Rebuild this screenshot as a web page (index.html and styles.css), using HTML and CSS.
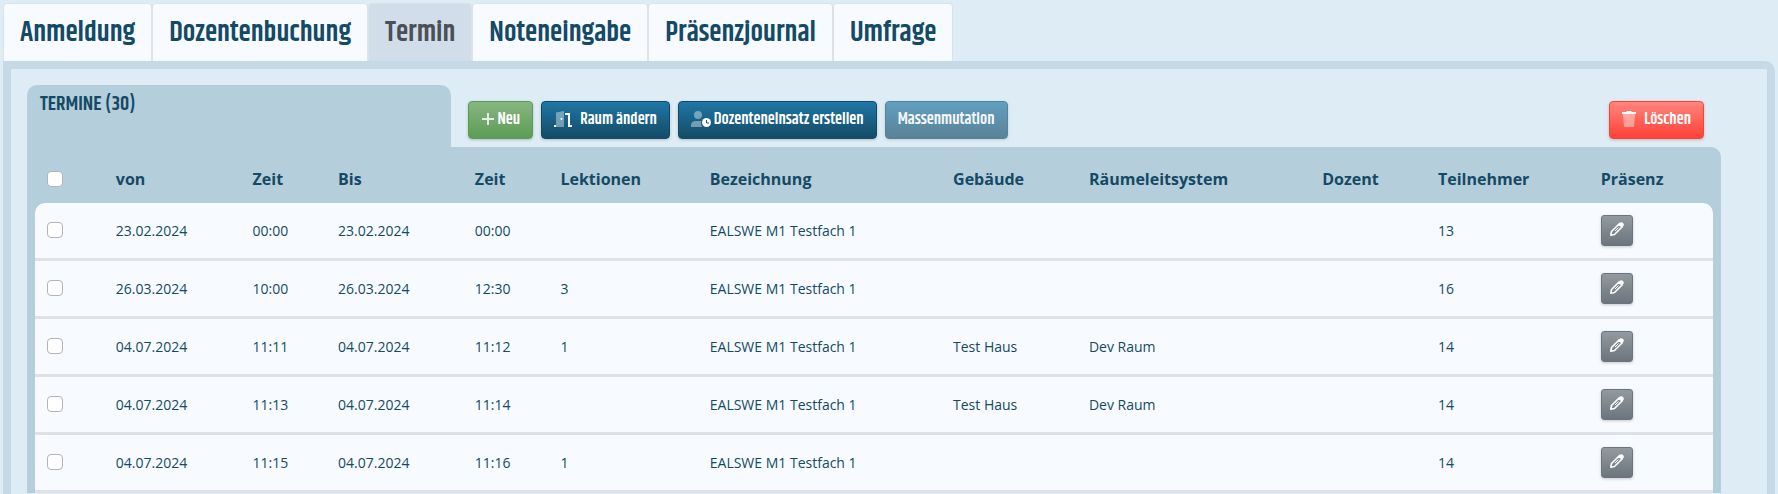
FILE: index.html
```html
<!DOCTYPE html>
<html lang="de">
<head>
    <meta charset="utf-8">
    <title>Termine</title>
    <link rel="stylesheet" href="styles.css">
</head>
<body>
    <svg class="sprite" aria-hidden="true">
        <symbol id="pen" viewBox="0 0 14 14">
            <path d="M.8 13.200L1.500 9.500L9 2L12 5L4.500 12.500Z" fill="none" stroke="currentColor" stroke-width="1.600" stroke-linejoin="round"/>
            <path d="M8.500 2L10 .6Q11.500-.4 13 1Q14.400 2.500 13.400 4L12 5.500Z" fill="currentColor"/>
            <path d="M5 9L8.500 5.500" stroke="currentColor" stroke-width="1"/>
        </symbol>
    </svg>

    <nav class="tabs">
        <a class="tab" href="#">Anmeldung</a>
        <a class="tab" href="#">Dozentenbuchung</a>
        <a class="tab active" href="#">Termin</a>
        <a class="tab" href="#">Noteneingabe</a>
        <a class="tab" href="#">Präsenzjournal</a>
        <a class="tab" href="#">Umfrage</a>
    </nav>

    <main class="panel">
        <div class="card-top">
            <h2 class="card-title">Termine (30)</h2>
            <div class="toolbar">
                <button type="button" class="btn btn-green">
                    <svg viewBox="0 0 14 16" width="14" height="16"><path d="M7 2v12M1 8h12" stroke="currentColor" stroke-width="2" opacity=".8"/></svg>
                    Neu
                </button>
                <button type="button" class="btn btn-blue btn-wide">
                    <svg viewBox="0 0 18 16" width="18" height="16"><path d="M2 1.500L10 0v16H2z" fill="currentColor" opacity=".4"/><path d="M0 15h2M11 3h4v12h3" fill="none" stroke="currentColor" stroke-width="2"/><circle cx="7.500" cy="8" r="1" fill="currentColor"/></svg>
                    Raum ändern
                </button>
                <button type="button" class="btn btn-blue">
                    <svg viewBox="0 0 20 16" width="20" height="16"><path d="M7 0a4 4 0 1 1 0 8a4 4 0 0 1 0-8zM0 16v-1.500Q0 10 5 10h5.500a5.500 5.500 0 0 0 1 6z" fill="currentColor" opacity=".4"/><circle cx="15.500" cy="11.500" r="4.500" fill="currentColor"/><path d="M15.500 9v3h2.500" fill="none" stroke="#175a7d" stroke-width="1"/></svg>
                    Dozenteneinsatz erstellen
                </button>
                <button type="button" class="btn btn-blue" disabled>Massenmutation</button>
                <button type="button" class="btn btn-red btn-wide">
                    <svg viewBox="0 0 14 16" width="14" height="16"><path d="M1 3h12l-1 13H2z" fill="currentColor" opacity=".4"/><path d="M0 1h4l1-1h4l1 1h4v2H0z" fill="currentColor"/></svg>
                    Löschen
                </button>
            </div>
        </div>

        <div class="card">
            <table class="dates">
                <colgroup>
                    <col class="col-check">
                    <col class="col-date">
                    <col class="col-time">
                    <col class="col-date">
                    <col class="col-time">
                    <col class="col-lessons">
                    <col class="col-name">
                    <col class="col-building">
                    <col class="col-room">
                    <col class="col-teacher">
                    <col class="col-members">
                    <col>
                </colgroup>
                <thead>
                    <tr>
                        <th><input type="checkbox" aria-label="Alle auswählen"></th>
                        <th>von</th>
                        <th>Zeit</th>
                        <th>Bis</th>
                        <th>Zeit</th>
                        <th>Lektionen</th>
                        <th>Bezeichnung</th>
                        <th>Gebäude</th>
                        <th>Räumeleitsystem</th>
                        <th>Dozent</th>
                        <th>Teilnehmer</th>
                        <th>Präsenz</th>
                    </tr>
                </thead>
                <tbody>
                    <tr>
                        <td><input type="checkbox" aria-label="Termin auswählen"></td>
                        <td>23.02.2024</td>
                        <td>00:00</td>
                        <td>23.02.2024</td>
                        <td>00:00</td>
                        <td></td>
                        <td>EALSWE M1 Testfach 1</td>
                        <td></td>
                        <td></td>
                        <td></td>
                        <td>13</td>
                        <td><button type="button" class="btn-edit" aria-label="Bearbeiten"><svg width="14" height="14"><use href="#pen"/></svg></button></td>
                    </tr>
                    <tr>
                        <td><input type="checkbox" aria-label="Termin auswählen"></td>
                        <td>26.03.2024</td>
                        <td>10:00</td>
                        <td>26.03.2024</td>
                        <td>12:30</td>
                        <td>3</td>
                        <td>EALSWE M1 Testfach 1</td>
                        <td></td>
                        <td></td>
                        <td></td>
                        <td>16</td>
                        <td><button type="button" class="btn-edit" aria-label="Bearbeiten"><svg width="14" height="14"><use href="#pen"/></svg></button></td>
                    </tr>
                    <tr>
                        <td><input type="checkbox" aria-label="Termin auswählen"></td>
                        <td>04.07.2024</td>
                        <td>11:11</td>
                        <td>04.07.2024</td>
                        <td>11:12</td>
                        <td>1</td>
                        <td>EALSWE M1 Testfach 1</td>
                        <td>Test Haus</td>
                        <td>Dev Raum</td>
                        <td></td>
                        <td>14</td>
                        <td><button type="button" class="btn-edit" aria-label="Bearbeiten"><svg width="14" height="14"><use href="#pen"/></svg></button></td>
                    </tr>
                    <tr>
                        <td><input type="checkbox" aria-label="Termin auswählen"></td>
                        <td>04.07.2024</td>
                        <td>11:13</td>
                        <td>04.07.2024</td>
                        <td>11:14</td>
                        <td></td>
                        <td>EALSWE M1 Testfach 1</td>
                        <td>Test Haus</td>
                        <td>Dev Raum</td>
                        <td></td>
                        <td>14</td>
                        <td><button type="button" class="btn-edit" aria-label="Bearbeiten"><svg width="14" height="14"><use href="#pen"/></svg></button></td>
                    </tr>
                    <tr>
                        <td><input type="checkbox" aria-label="Termin auswählen"></td>
                        <td>04.07.2024</td>
                        <td>11:15</td>
                        <td>04.07.2024</td>
                        <td>11:16</td>
                        <td>1</td>
                        <td>EALSWE M1 Testfach 1</td>
                        <td></td>
                        <td></td>
                        <td></td>
                        <td>14</td>
                        <td><button type="button" class="btn-edit" aria-label="Bearbeiten"><svg width="14" height="14"><use href="#pen"/></svg></button></td>
                    </tr>
                </tbody>
            </table>
        </div>
    </main>
</body>
</html>
```

FILE: styles.css
```css
* {
    box-sizing: border-box;
}
body {
    margin: 0;
    padding: 3px 3px 0;
    height: 100vh;
    overflow: hidden;
    background: #deecf5;
    color: #144a65;
    font-family: "Open Sans", "Noto Sans", sans-serif;
    font-size: 14px;
}
.sprite {
    display: none;
}

/* tabs */
.tabs {
    display: flex;
}
.tab {
    height: 58px;
    padding: 0 16px;
    border: 1px solid #dee2e6;
    border-bottom: 0;
    border-radius: 4px 4px 0 0;
    background: #f7fbff;
    color: #144a65;
    font-family: Khand, "Liberation Sans Narrow", "Open Sans", sans-serif;
    font-size: 28px;
    font-weight: 600;
    line-height: 58px;
    text-decoration: none;
}
.tab.active {
    background: #d1dde8;
    color: #495057;
}

.panel {
    border: 8px solid #c6d9e7;
    border-radius: 0 10px 0 0;
    padding: 16px 46px 16px 16px;
}

/* title and buttons */
.card-top {
    display: flex;
}
.card-title {
    width: 25%;
    height: 62px;
    margin: 0;
    padding: 0 13px;
    border-radius: 10px 10px 0 0;
    background: #b5cedc;
    font-family: Khand, "Liberation Sans Narrow", "Open Sans", sans-serif;
    font-size: 20px;
    font-weight: 600;
    line-height: 40px;
    text-transform: uppercase;
}
.toolbar {
    flex: 1;
    display: flex;
    align-items: flex-end;
    gap: 8px;
    padding: 0 17px 8px;
}
.btn {
    display: flex;
    align-items: center;
    gap: 3px;
    height: 38px;
    padding: 0 12px 2px;
    border: 1px solid;
    border-radius: 4px;
    box-shadow: 0 1px 3px rgba(0, 0, 0, 0.2);
    color: #fff;
    font-family: Khand, "Liberation Sans Narrow", "Open Sans", sans-serif;
    font-size: 16px;
    font-weight: 600;
}
.btn-green {
    border-color: #5c9a57;
    background: linear-gradient(#87b681, #5c9c55);
}
.btn-blue {
    border-color: #144a65;
    background: linear-gradient(#1f77a6, #144a65);
}
.btn-blue:disabled {
    opacity: 0.65;
}
.btn-wide {
    gap: 8px;
}
.btn-red {
    margin-left: auto;
    border-color: #ff4136;
    background: linear-gradient(#ff857e, #ff4136);
}

/* table */
.card {
    padding: 0 8px;
    border-radius: 0 10px 0 0;
    background: #b5cedc;
}
.dates {
    width: 100%;
    table-layout: fixed;
    border-spacing: 0;
}
.dates th,
.dates td {
    padding: 0 12px;
    text-align: left;
    white-space: nowrap;
}
.dates th {
    height: 56px;
    padding-top: 8px;
    font-size: 16px;
}
.dates td {
    height: 58px;
    border-bottom: 3px solid #dee2e6;
    background: #f7fbff;
}
.dates tbody tr:first-child td:first-child {
    border-top-left-radius: 10px;
}
.dates tbody tr:first-child td:last-child {
    border-top-right-radius: 10px;
}
.col-check { width: 4.1%; }
.col-date { width: 8.15%; }
.col-time { width: 5.1%; }
.col-lessons { width: 8.9%; }
.col-name { width: 14.5%; }
.col-building { width: 8.1%; }
.col-room { width: 13.9%; }
.col-teacher { width: 6.9%; }
.col-members { width: 9.7%; }

.dates input[type="checkbox"] {
    appearance: none;
    display: block;
    width: 16px;
    height: 16px;
    margin: 0;
    border: 1px solid #adb5bd;
    border-radius: 4px;
    background: #fff;
}
.dates td input[type="checkbox"] {
    margin-bottom: 1px;
}
.btn-edit {
    display: flex;
    align-items: center;
    justify-content: center;
    width: 32px;
    height: 31px;
    padding: 0 0 3px;
    border: 1px solid #6c757d;
    border-radius: 3px;
    background: linear-gradient(#939a9f, #6c757d);
    box-shadow: 0 1px 3px rgba(0, 0, 0, 0.2);
    color: #fff;
}
```
